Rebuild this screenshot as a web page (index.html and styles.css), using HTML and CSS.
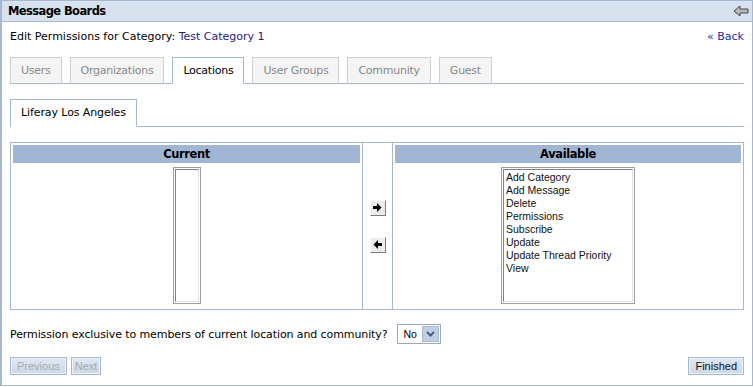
FILE: index.html
```html
<!DOCTYPE html>
<html lang="en">
<head>
    <meta charset="UTF-8">
    <title>Message Boards</title>
    <link rel="stylesheet" href="styles.css">
</head>
<body>
    <div class="portlet">
        <div class="portlet-title">
            <span>Message Boards</span>
            <svg class="back-icon" width="16" height="12" viewBox="0 0 16 12">
                <polygon points="1,6 7,1 7,4 15,4 15,8 7,8 7,11" fill="#b9b9b9" stroke="#444" stroke-width="1" stroke-linejoin="miter"/>
            </svg>
        </div>

        <div class="portlet-body">
            <div class="header-row">
                <span>Edit Permissions for Category: <a href="#" class="cat-link">Test Category 1</a></span>
                <a href="#" class="back-link">&laquo; Back</a>
            </div>

            <ul class="tabs">
                <li>Users</li>
                <li>Organizations</li>
                <li class="active">Locations</li>
                <li>User Groups</li>
                <li>Community</li>
                <li>Guest</li>
            </ul>

            <ul class="tabs sub-tabs">
                <li class="active">Liferay Los Angeles</li>
            </ul>

            <div class="perm-grid">
                <div class="perm-col">
                    <div class="col-head">Current</div>
                    <div class="listbox narrow"><div class="listbox-inner"></div></div>
                </div>
                <div class="move-col">
                    <button class="move-btn">
                        <svg width="9" height="9" viewBox="0 0 9 9"><polygon points="0,3 4,3 4,0 8.5,4.5 4,9 4,6 0,6" fill="#000"/></svg>
                    </button>
                    <button class="move-btn">
                        <svg width="9" height="9" viewBox="0 0 9 9"><polygon points="9,3 5,3 5,0 0.5,4.5 5,9 5,6 9,6" fill="#000"/></svg>
                    </button>
                </div>
                <div class="perm-col">
                    <div class="col-head">Available</div>
                    <div class="listbox wide">
                        <div class="listbox-inner">
                            <div class="option">Add Category</div>
                            <div class="option">Add Message</div>
                            <div class="option">Delete</div>
                            <div class="option">Permissions</div>
                            <div class="option">Subscribe</div>
                            <div class="option">Update</div>
                            <div class="option">Update Thread Priority</div>
                            <div class="option">View</div>
                        </div>
                    </div>
                </div>
            </div>

            <div class="exclusive-row">
                <span>Permission exclusive to members of current location and community?</span>
                <div class="dropdown">
                    <span class="dropdown-value">No</span>
                    <span class="dropdown-btn">
                        <svg width="9" height="6" viewBox="0 0 9 6"><polyline points="1,1 4.5,4.5 8,1" fill="none" stroke="#4a5f85" stroke-width="2"/></svg>
                    </span>
                </div>
            </div>

            <div class="actions">
                <div class="nav-buttons">
                    <button class="btn" disabled>Previous</button>
                    <button class="btn btn-small" disabled>Next</button>
                </div>
                <button class="btn">Finished</button>
            </div>
        </div>
    </div>
</body>
</html>
```

FILE: styles.css
```css
* {
    box-sizing: border-box;
    margin: 0;
    padding: 0;
}

body {
    font-family: "DejaVu Sans", Verdana, sans-serif;
    font-size: 11px;
    color: #000;
    background: #fff;
}

.portlet {
    width: 753px;
    height: 386px;
    border: 1px solid #a5b8cf;
    border-left-width: 2px;
    background: #fff;
}

.portlet-title {
    height: 21px;
    display: flex;
    align-items: center;
    justify-content: space-between;
    padding: 0 3px 0 6px;
    background: #d8e2ee;
    border-bottom: 1px solid #a5b8cf;
    font-weight: bold;
    font-size: 11.5px;
    letter-spacing: -0.6px;
}

.portlet-body {
    padding: 0 8px 0 8px;
}

.header-row {
    display: flex;
    justify-content: space-between;
    align-items: center;
    height: 17px;
    margin-top: 6px;
}

.cat-link {
    color: #2a1a7c;
    text-decoration: none;
}

.back-link {
    color: #1a2ca0;
    text-decoration: none;
}

.tabs {
    list-style: none;
    display: flex;
    gap: 8px;
    margin-top: 12px;
    border-bottom: 1px solid #a5b8cf;
    letter-spacing: -0.25px;
}

.tabs li {
    height: 27px;
    line-height: 25px;
    padding: 0 10px;
    margin-bottom: -1px;
    background: #f4f4f4;
    border: 1px solid #cfcfcf;
    border-bottom-color: #a5b8cf;
    color: #888;
}

.tabs li.active {
    background: #fff;
    border-color: #a5b8cf;
    border-bottom-color: #fff;
    color: #000;
}

.sub-tabs {
    margin-top: 15px;
    letter-spacing: -0.1px;
}

.sub-tabs li {
    height: 28px;
    line-height: 26px;
}

.perm-grid {
    display: grid;
    grid-template-columns: 352px 30px 1fr;
    margin-top: 15px;
    height: 168px;
    border: 1px solid #a5b8cf;
}

.perm-col {
    display: flex;
    flex-direction: column;
    align-items: center;
    padding: 2px;
    border-right: 1px solid #a5b8cf;
}

.perm-col:last-child {
    border-right: none;
}

.col-head {
    width: 100%;
    height: 18px;
    line-height: 18px;
    text-align: center;
    background: #a1b6d2;
    font-weight: bold;
    font-size: 11.5px;
    letter-spacing: -0.4px;
}

.listbox {
    margin-top: 4px;
    height: 137px;
    border: 1px solid #9c9c9c;
    padding: 1px;
    background: #fff;
}

.listbox.narrow {
    width: 28px;
}

.listbox.wide {
    width: 134px;
}

.listbox-inner {
    height: 100%;
    border: 1px solid;
    border-color: #808080 #e2e2e2 #e2e2e2 #808080;
    padding-top: 1px;
}

.option {
    font-family: "Liberation Sans", Arial, sans-serif;
    font-size: 10.5px;
    line-height: 13px;
    padding-left: 2px;
    color: #111;
}

.move-col {
    display: flex;
    flex-direction: column;
    align-items: center;
    justify-content: center;
    gap: 21px;
    border-right: 1px solid #a5b8cf;
}

.move-btn {
    width: 16px;
    height: 16px;
    display: flex;
    align-items: center;
    justify-content: center;
    background: #ececec;
    border: 1px solid;
    border-color: #fff #7c7c7c #7c7c7c #fff;
}

.exclusive-row {
    display: flex;
    align-items: center;
    gap: 10px;
    height: 20px;
    margin-top: 14px;
    letter-spacing: -0.1px;
}

.dropdown {
    display: flex;
    width: 44px;
    height: 20px;
    border: 1px solid #9aa9bd;
    background: #fff;
    padding: 1px;
}

.dropdown-value {
    flex: 1;
    font-family: "Liberation Sans", Arial, sans-serif;
    font-size: 10.5px;
    line-height: 16px;
    padding-left: 4px;
    letter-spacing: 0;
}

.dropdown-btn {
    width: 17px;
    display: flex;
    align-items: center;
    justify-content: center;
    background: #c0cfe2;
    border: 1px solid #a9b9d0;
}

.actions {
    display: flex;
    justify-content: space-between;
    margin-top: 13px;
}

.nav-buttons {
    display: flex;
    gap: 4px;
}

.btn {
    height: 18px;
    padding: 0 6px;
    font-family: "Liberation Sans", Arial, sans-serif;
    font-size: 11px;
    color: #111;
    background: linear-gradient(#dfe7f1, #cdd8e7);
    border: 1px solid #a5b8cf;
    box-shadow: inset 0 0 0 1px #eef2f8;
}

.btn-small {
    padding: 0 3px;
}

.btn:disabled {
    color: #a4aab2;
}
```
